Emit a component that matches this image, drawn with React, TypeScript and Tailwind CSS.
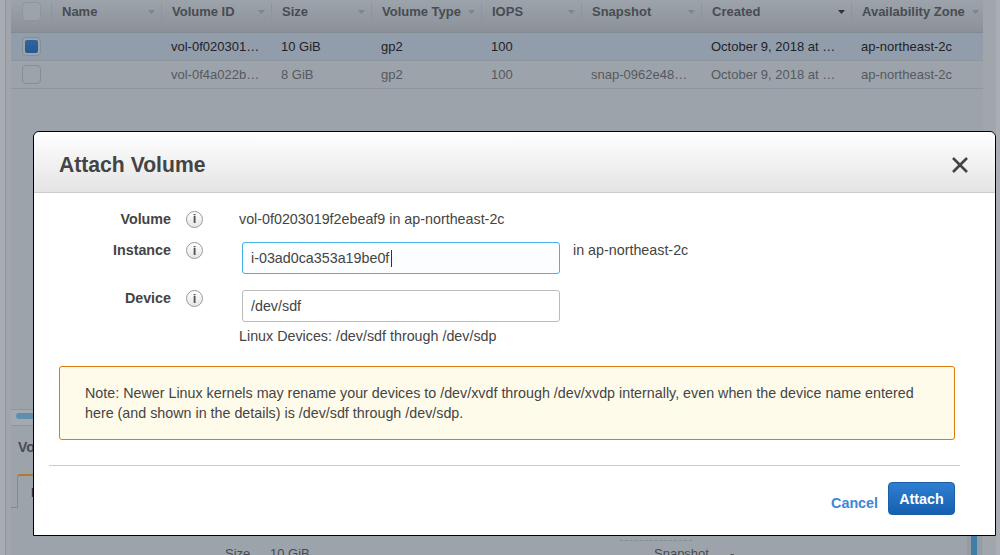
import { X } from 'lucide-react';

const columns = [
  { name: 'Name', width: 'w-[110px]', sort: 'fill-[#7f858c]' },
  { name: 'Volume ID', width: 'w-[110px]', sort: 'fill-[#7f858c]' },
  { name: 'Size', width: 'w-[100px]', sort: 'fill-[#7f858c]' },
  { name: 'Volume Type', width: 'w-[110px]', sort: 'fill-[#7f858c]' },
  { name: 'IOPS', width: 'w-[100px]', sort: 'fill-[#7f858c]' },
  { name: 'Snapshot', width: 'w-[120px]', sort: 'fill-[#7f858c]' },
  { name: 'Created', width: 'w-[150px]', sort: 'fill-[#2f3338]' },
  { name: 'Availability Zone', width: 'w-[134px]', sort: 'fill-[#7f858c]' },
];

const rows = [
  { id: 'vol-0f020301…', size: '10 GiB', iops: '100', snap: '', selected: true },
  { id: 'vol-0f4a022b…', size: '8 GiB', iops: '100', snap: 'snap-0962e48…', selected: false },
];

function InfoIcon() {
  return (
    <span className="flex h-[17px] w-[17px] items-center justify-center rounded-full border border-[#9a9a9a] bg-gradient-to-b from-white to-[#e6e6e6] text-[13px] font-bold text-[#555555]">
      i
    </span>
  );
}

function Background() {
  return (
    <div className="flex h-[555px] w-[1000px] overflow-hidden bg-[#a9aeb4] text-[13px] leading-[18px]">
      <div className="w-[5px] shrink-0 bg-[#a6acb2]" />
      <div className="w-[991px] shrink-0 border-l border-[#8e959c] bg-[#a0a6ac] pl-[5px] pr-[13px]">
        <div className="h-full bg-[#9da3aa]">
          <div className="flex h-[33px] items-start border-b border-[#858b92] bg-gradient-to-b from-[#9ca3aa] to-[#8c9198] pl-[11px]">
            <div className="mt-[2px] h-[19px] w-[19px] shrink-0 rounded-[4px] border border-[#8e959c] bg-[#9ca3aa]" />
            <div className="ml-[10px] flex">
              {columns.map((c) => (
                <div key={c.name} className={`${c.width} mt-[3px] flex h-[18px] shrink-0 items-center justify-between border-l border-[#8e959c] pl-[10px] pr-[6px] font-bold text-[#484c52]`}>
                  <span className="whitespace-nowrap">{c.name}</span>
                  <svg width="7" height="4" viewBox="0 0 7 4" className={c.sort}>
                    <path d="M0 0h7L3.5 4z" />
                  </svg>
                </div>
              ))}
            </div>
          </div>
          {rows.map((r) => (
            <div key={r.id} className={`flex h-[28px] items-center border-b border-[#8e959c] ${r.selected ? 'bg-[#929dab] text-[#1f2226]' : 'text-[#55595f]'}`}>
              <div className="ml-[11px] flex h-[19px] w-[19px] items-center justify-center rounded-[4px] border border-[#878d94] bg-[#9ca3aa]">
                {r.selected && <div className="h-[13px] w-[13px] rounded-[2px] bg-gradient-to-b from-[#2d659f] to-[#255a92]" />}
              </div>
              <div className="w-[130px]" />
              <div className="w-[110px]">{r.id}</div>
              <div className="w-[100px]">{r.size}</div>
              <div className="w-[110px]">gp2</div>
              <div className="w-[100px]">{r.iops}</div>
              <div className="w-[120px]">{r.snap}</div>
              <div className="w-[150px]">October 9, 2018 at …</div>
              <div>ap-northeast-2c</div>
            </div>
          ))}
          <div className="mt-[320px] h-[17px] border-y border-[#8e959c] bg-[#a3a9af] pl-[5px] pt-[3px]">
            <div className="h-[6px] w-[60px] rounded-full bg-[#5f8fb0]" />
          </div>
          <div className="ml-[7px] mt-[12px] text-[14px] font-bold text-[#484c52]">Volumes</div>
          <div className="mt-[18px] flex h-[34px] items-end">
            <div className="h-[1px] w-[6px] bg-[#858b92]" />
            <div className="h-[34px] w-[60px] rounded-tl-[3px] border-l border-t-2 border-[#858b92] border-t-[#b07a30] pl-[13px] pt-[8px] font-bold text-[#33384a]">
              Description
            </div>
          </div>
          <div className="mt-[37px] flex text-[#484c52]">
            <div className="ml-[214px] w-[45px]">Size</div>
            <div className="w-[384px]">10 GiB</div>
            <div className="relative w-[76px]">
              <div className="absolute -left-[34px] -top-[5px] w-[72px] border-t border-dashed border-[#858b92]" />
              Snapshot
            </div>
            <div>-</div>
          </div>
        </div>
      </div>
    </div>
  );
}

export default function App() {
  return (
    <div className="relative h-[555px] w-[1000px] overflow-hidden font-['Liberation_Sans',Arial,sans-serif] text-[14.3px] leading-[18px] text-[#444444]">
      <Background />
      <div className="absolute left-[967px] top-[535px] h-[20px] w-[15px] bg-[#959ca3] px-[4px]">
        <div className="h-full w-[6px] bg-[#3f7fa6]" />
      </div>
      <div className="absolute left-[33px] top-[131px] w-[963px] rounded-t-[6px] border border-black bg-white">
        <div className="flex h-[61px] items-center justify-between rounded-t-[6px] border-b border-[#cccccc] bg-gradient-to-b from-white to-[#e4e4e4] pl-[25px] pr-[21px] pt-[6px]">
          <h2 className="text-[21.15px] font-bold leading-[24px] text-[#444444]">Attach Volume</h2>
          <X className="h-[28px] w-[28px] text-[#444444]" strokeWidth={2.2} strokeLinecap="butt" />
        </div>
        <div className="flex flex-col pl-[25px] pr-[40px]">
          <div className="mt-[17px] flex h-[18px] items-center">
            <div className="w-[112px] text-right font-bold">Volume</div>
            <div className="ml-[15px] w-[53px]"><InfoIcon /></div>
            <div>vol-0f0203019f2ebeaf9 in ap-northeast-2c</div>
          </div>
          <div className="mt-[13px] flex items-start">
            <div className="w-[112px] text-right font-bold">Instance</div>
            <div className="ml-[15px] mt-[1px] w-[56px]"><InfoIcon /></div>
            <div className="relative mt-[1px]">
              <input readOnly value="i-03ad0ca353a19be0f" className="h-[32px] w-[318px] rounded-[3px] border border-[#46b0e8] bg-[#fcfdff] px-[8px] text-[#444444] outline-none" />
              <div className="absolute left-[149px] top-[8px] h-[17px] w-[1px] bg-[#333333]" />
            </div>
            <div className="ml-[13px]">in ap-northeast-2c</div>
          </div>
          <div className="mt-[16px] flex items-start">
            <div className="-mt-[1px] w-[112px] text-right font-bold">Device</div>
            <div className="ml-[15px] w-[56px]"><InfoIcon /></div>
            <div>
              <input readOnly value="/dev/sdf" className="h-[32px] w-[318px] rounded-[3px] border border-[#bbbbbb] bg-white px-[8px] text-[#444444] outline-none" />
              <div className="-ml-[3px] mt-[5px]">Linux Devices: /dev/sdf through /dev/sdp</div>
            </div>
          </div>
          <div className="mt-[21px] rounded-[3px] border border-[#dd7b10] bg-[#fffbea] py-[16px] pl-[25px] pr-[25px] leading-[20px]">
            Note: Newer Linux kernels may rename your devices to /dev/xvdf through /dev/xvdp internally, even when the device name entered here (and shown in the details) is /dev/sdf through /dev/sdp.
          </div>
        </div>
        <div className="ml-[15px] mr-[35px] mt-[25px] border-t border-[#cccccc]" />
        <div className="flex items-start justify-end gap-[10px] pb-[20px] pr-[40px] pt-[16px]">
          <button className="mt-[12px] font-bold text-[#3b87d8]">Cancel</button>
          <button className="h-[33px] w-[67px] rounded-[4px] border border-[#1a5fa8] bg-gradient-to-b from-[#2f7fd0] to-[#155fb0] font-bold text-white">Attach</button>
        </div>
      </div>
    </div>
  );
}
